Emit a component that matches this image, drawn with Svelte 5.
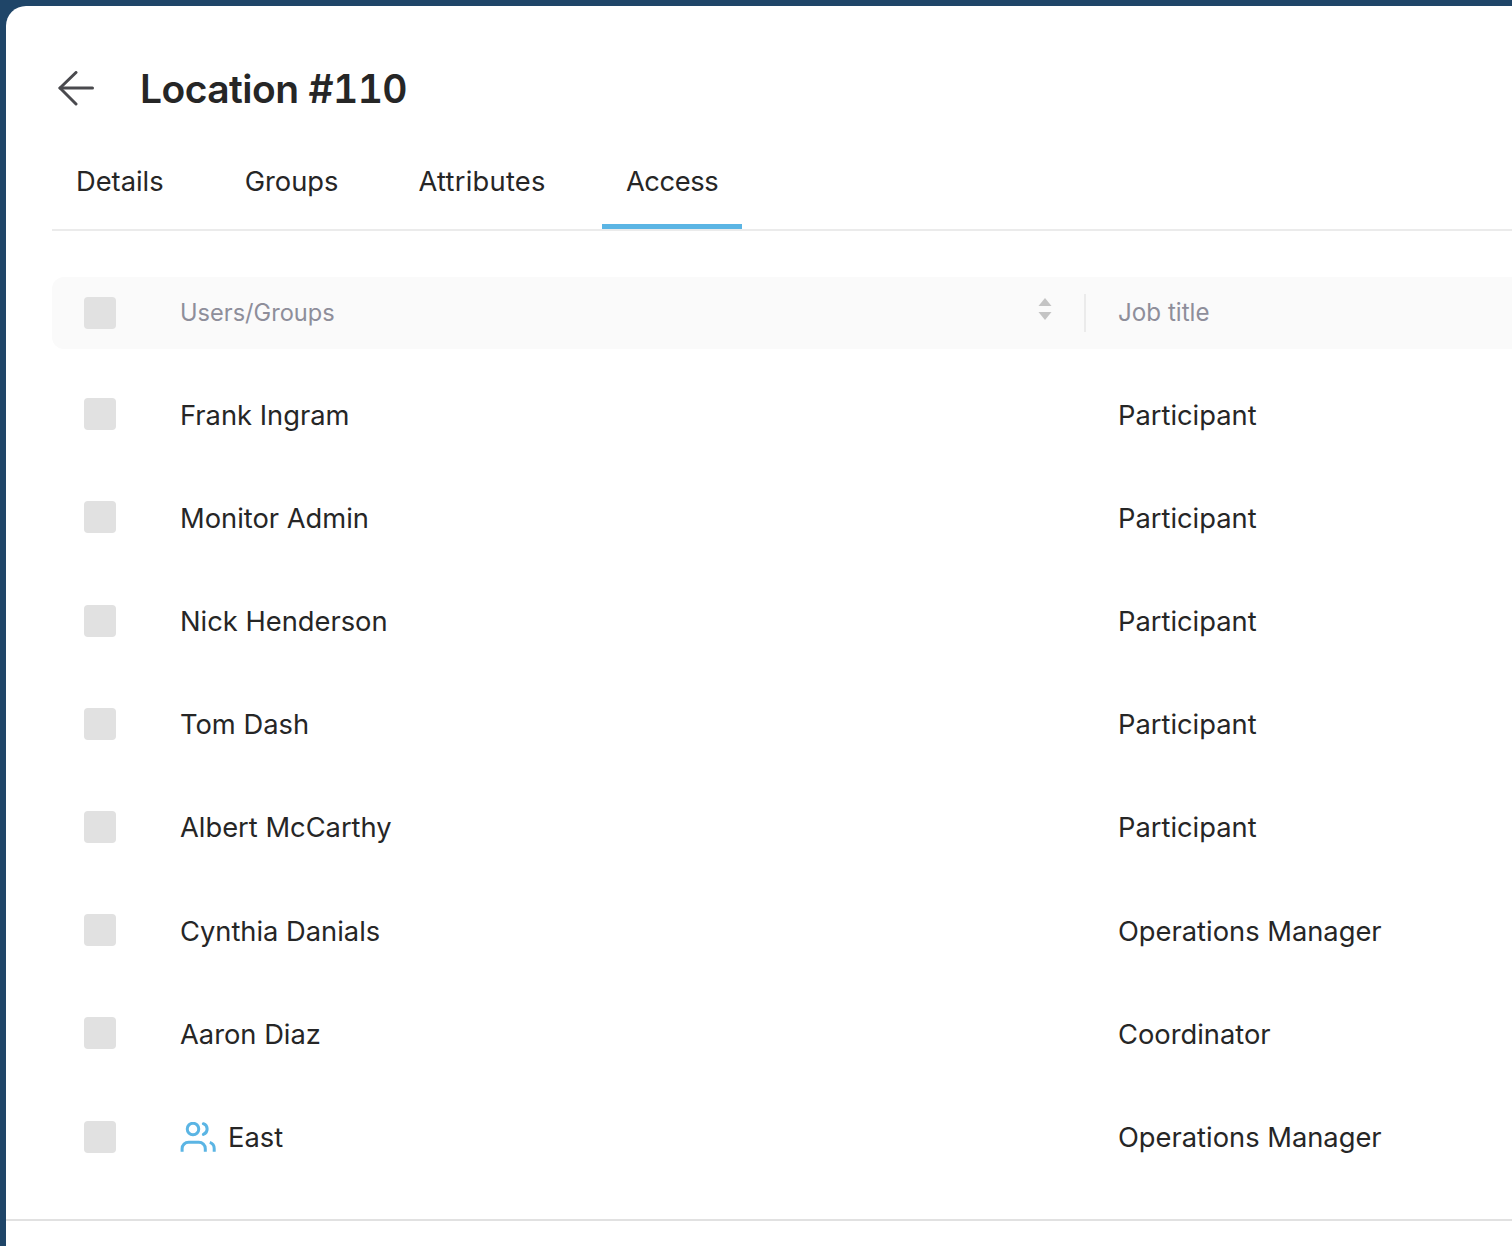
<script>
  const rows = [
    { name: 'Frank Ingram', job: 'Participant' },
    { name: 'Monitor Admin', job: 'Participant' },
    { name: 'Nick Henderson', job: 'Participant' },
    { name: 'Tom Dash', job: 'Participant' },
    { name: 'Albert McCarthy', job: 'Participant' },
    { name: 'Cynthia Danials', job: 'Operations Manager' },
    { name: 'Aaron Diaz', job: 'Coordinator' },
    { name: 'East', job: 'Operations Manager', group: true }
  ];
  const tabs = ['Details', 'Groups', 'Attributes', 'Access'];
</script>

<div class="shell">
  <main class="panel">
    <header class="head">
      <svg class="back" width="38" height="36" viewBox="0 0 38 36" fill="none" stroke="#4a4a4e" stroke-width="3" stroke-linecap="round" stroke-linejoin="round">
        <path d="M3 17H35.500" />
        <path d="M19 1.500 3 17 19 33" />
      </svg>
      <h1>Location #110</h1>
    </header>

    <nav class="tabs">
      {#each tabs as tab}
        <div class="tab" class:active={tab === 'Access'}>{tab}</div>
      {/each}
    </nav>

    <div class="thead">
      <span class="check"></span>
      <span class="th-name">Users/Groups</span>
      <svg class="sort" width="14" height="22" viewBox="0 0 14 22" fill="#c4c4c4">
        <path d="M7 0l6.500 8H.5z" />
        <path d="M7 22l6.500-8H.5z" />
      </svg>
      <span class="divider"></span>
      <span class="th-job">Job title</span>
    </div>

    <div class="tbody">
      {#each rows as row}
        <div class="row">
          <span class="check"></span>
          <span class="name">
            {#if row.group}
              <svg class="group-icon" width="36" height="30" viewBox="0 0 36 30" fill="none" stroke="#5bb5e4" stroke-width="3">
                <circle cx="13" cy="7" r="5.750" />
                <path d="M2.100 29.700v-3a6.500 6.500 0 0 1 6.500-6.500h10.200a6.500 6.500 0 0 1 6.500 6.500v3" />
                <path d="M23.400 1.700a5.700 5.700 0 0 1 0 10.700" stroke-linecap="round" />
                <path d="M29.800 20.300a6.500 6.500 0 0 1 4.400 6.100v3.300" />
              </svg>
            {/if}
            {row.name}
          </span>
          <span class="job">{row.job}</span>
        </div>
      {/each}
    </div>

    <div class="foot"></div>
  </main>
</div>

<style>
  :global(body) {
    margin: 0;
    background: #1f4568;
  }

  .shell {
    height: 1246px;
    padding: 6px 0 0 6px;
    box-sizing: border-box;
    overflow: hidden;
    font-family: Inter, "Liberation Sans", sans-serif;
    color: #262626;
  }

  .panel {
    height: 1240px;
    background: #fff;
    border-top-left-radius: 20px;
    padding-left: 46px;
    box-sizing: border-box;
    overflow: hidden;
  }

  .head {
    display: flex;
    align-items: center;
    height: 38px;
    margin-top: 64px;
    padding-left: 5px;
  }

  .back {
    flex: none;
    margin-right: 45px;
  }

  h1 {
    margin: 0;
    font-size: 39px;
    line-height: 38px;
    font-weight: 600;
    font-variant-numeric: tabular-nums;
    letter-spacing: -0.55px;
    color: #262626;
  }

  .tabs {
    display: flex;
    height: 87px;
    margin-top: 34px;
    border-bottom: 2px solid #ebebeb;
  }

  .tab {
    padding: 21px 24px 0;
    margin-right: 33px;
    font-size: 27.300px;
    line-height: 38px;
    height: 87px;
    box-sizing: border-box;
    white-space: nowrap;
  }

  .tab:nth-child(2) {
    margin-right: 32px;
  }

  .tab:nth-child(3) {
    letter-spacing: 0.25px;
    margin-right: 32.300px;
  }

  .tab:last-child {
    margin-right: 0;
  }

  .tab.active {
    border-bottom: 5px solid #5bb5e4;
    letter-spacing: -0.4px;
  }

  .thead {
    display: flex;
    align-items: center;
    height: 72px;
    margin-top: 46px;
    padding-left: 32px;
    background: #fafafa;
    border-radius: 12px 0 0 12px;
    font-size: 23.600px;
    color: #8e8e9a;
  }

  .check {
    flex: none;
    width: 32px;
    height: 32px;
    border-radius: 4px;
    background: #e1e1e1;
  }

  .th-name {
    margin-left: 64px;
    padding-bottom: 1px;
    width: 858px;
    flex: none;
  }

  .sort {
    flex: none;
    margin-right: 32px;
    margin-bottom: 8px;
  }

  .divider {
    flex: none;
    width: 2px;
    height: 38px;
    background: #ebebeb;
  }

  .th-job {
    margin-left: 32px;
    padding-bottom: 1px;
    font-size: 24.200px;
  }

  .tbody {
    margin-top: 13.600px;
  }

  .row {
    display: flex;
    align-items: center;
    height: 103.200px;
    padding-left: 32px;
    font-size: 27.300px;
  }

  .name {
    display: flex;
    align-items: center;
    margin-left: 64px;
    padding-top: 2px;
    width: 938px;
    flex: none;
    white-space: nowrap;
  }

  .job {
    padding-top: 2px;
  }

  .group-icon {
    margin-right: 12px;
    margin-top: -2px;
    flex: none;
  }

  .foot {
    margin-top: 30.500px;
    margin-left: -46px;
    height: 2px;
    background: #e1e1e1;
  }
</style>
